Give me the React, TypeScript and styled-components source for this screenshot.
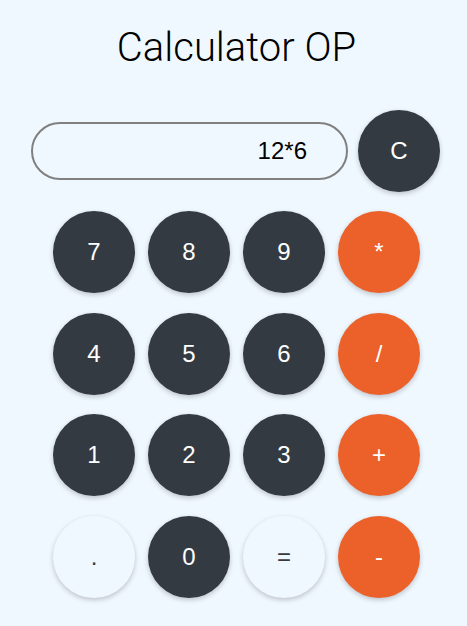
import React from "react";
import styled, { createGlobalStyle } from "styled-components";

const Global = createGlobalStyle`
  html, body { margin: 0; padding: 0; background: #f0f8ff; }
  body { font-family: "Liberation Sans", Arial, sans-serif; }
`;

const Page = styled.div`
  width: 467px;
  min-height: 626px;
  box-sizing: border-box;
  padding: 22px 0 0 6px;
  display: flex;
  flex-direction: column;
  align-items: center;
`;

const Title = styled.h1`
  margin: 0;
  font-family: Roboto, "Liberation Sans", sans-serif;
  font-weight: 300;
  font-size: 40px;
  line-height: 52px;
  color: #000;
`;

const TopRow = styled.div`
  margin-top: 36px;
  margin-left: -2px;
  display: flex;
  align-items: center;
  gap: 10px;
`;

const Display = styled.div`
  width: 317px;
  height: 58px;
  box-sizing: border-box;
  border: 2px solid #808080;
  border-radius: 29px;
  display: flex;
  align-items: center;
  justify-content: flex-end;
  padding-right: 39px;
  font-size: 24px;
  color: #000;
`;

const Keys = styled.div`
  margin-top: 19px;
  display: grid;
  grid-template-columns: repeat(4, 82px);
  column-gap: 13px;
  row-gap: 19.6px;
`;

type Kind = "dark" | "light" | "op";

const bg: Record<Kind, string> = { dark: "#343a41", light: "#f0f8ff", op: "#eb6129" };
const fg: Record<Kind, string> = { dark: "#ffffff", light: "#343a41", op: "#ffffff" };

const Key = styled.button<{ $kind: Kind }>`
  width: 82px;
  height: 82px;
  border-radius: 50%;
  border: none;
  padding: 0;
  background: ${(p) => bg[p.$kind]};
  color: ${(p) => fg[p.$kind]};
  font-family: "Liberation Sans", Arial, sans-serif;
  font-size: 24px;
  box-shadow: 0 2px 5px rgba(0, 0, 0, 0.22);
  display: flex;
  align-items: center;
  justify-content: center;
  cursor: pointer;
`;

const keys: [string, Kind][] = [
  ["7", "dark"], ["8", "dark"], ["9", "dark"], ["*", "op"],
  ["4", "dark"], ["5", "dark"], ["6", "dark"], ["/", "op"],
  ["1", "dark"], ["2", "dark"], ["3", "dark"], ["+", "op"],
  [".", "light"], ["0", "dark"], ["=", "light"], ["-", "op"],
];

export default function App() {
  return (
    <Page>
      <Global />
      <Title>Calculator OP</Title>
      <TopRow>
        <Display>12*6</Display>
        <Key $kind="dark">C</Key>
      </TopRow>
      <Keys>
        {keys.map(([k, kind]) => (
          <Key key={k} $kind={kind}>{k}</Key>
        ))}
      </Keys>
    </Page>
  );
}
